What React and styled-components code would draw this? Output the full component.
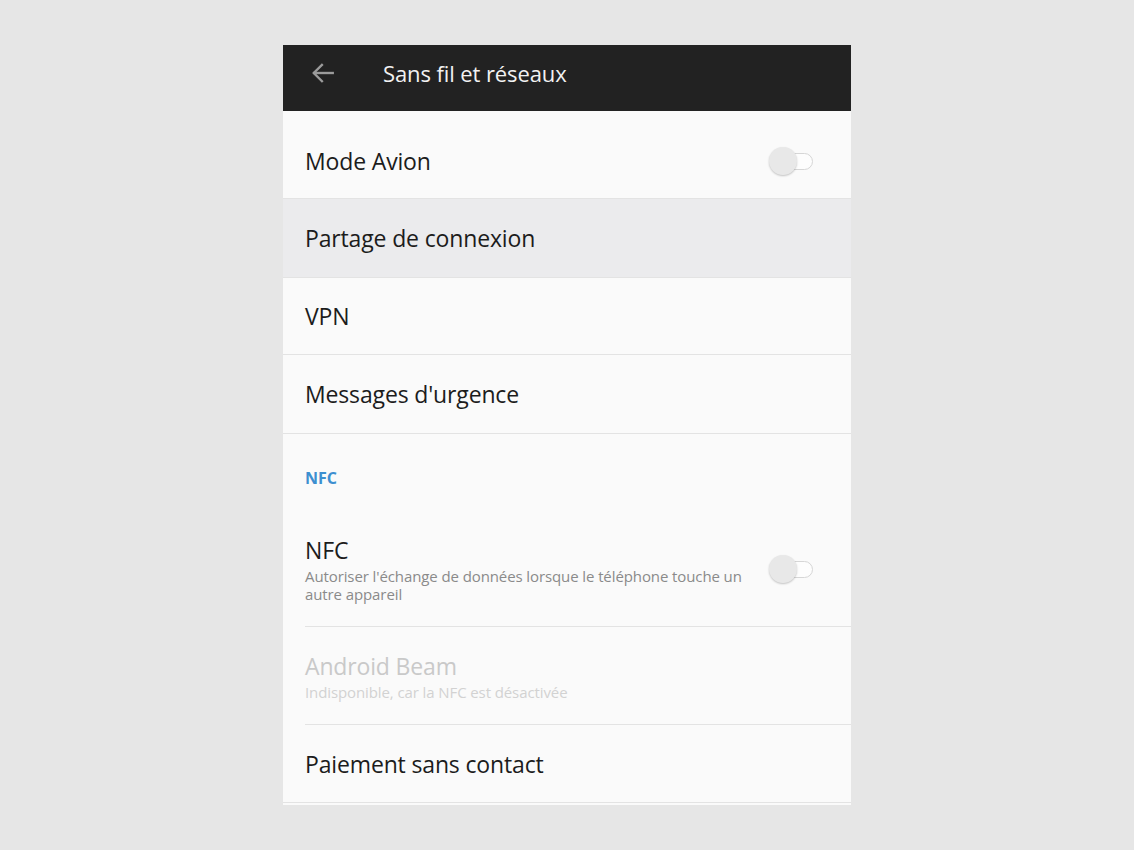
import styled, { createGlobalStyle } from "styled-components";

const GlobalStyle = createGlobalStyle`
    body {
        margin: 0;
        background: #e6e6e6;
        font-family: "Open Sans", "Noto Sans", sans-serif;
    }
`

const Page = styled.div`
    padding-top: 45px;
    min-height: 850px;
    box-sizing: border-box;
`

const Phone = styled.div`
    width: 568px;
    margin: 0 auto;
    background: #fafafa;
    padding-bottom: 2px;
`

const Toolbar = styled.div`
    height: 66px;
    background: #222222;
    display: flex;
    align-items: center;
    padding-left: 27px;
    padding-bottom: 10px;
    box-sizing: border-box;
`

const BackButton = styled.div`
    width: 26px;
    height: 26px;
    display: flex;
    align-items: center;
    justify-content: center;
    margin-right: 47px;
`

const ToolbarTitle = styled.div`
    color: #f2f2f2;
    font-size: 22px;
    letter-spacing: -0.1px;
`

const Row = styled.div`
    display: flex;
    align-items: center;
    min-height: ${p => p.$height || 77}px;
    padding: ${p => p.$pad || "0"};
    margin-left: ${p => (p.$inset ? 22 : 0)}px;
    padding-left: ${p => (p.$inset ? 0 : 22)}px;
    padding-right: 38px;
    background: ${p => (p.$pressed ? "#ebebed" : "transparent")};
    border-bottom: 1px solid #e3e3e3;
    box-sizing: border-box;
`

const RowText = styled.div`
    flex: 1;
    display: flex;
    flex-direction: column;
`

const Title = styled.div`
    font-size: 23px;
    line-height: 30px;
    letter-spacing: -0.15px;
    color: ${p => (p.$disabled ? "#c9c9c9" : "#1c1c1c")};
`

const Summary = styled.div`
    margin-top: 2px;
    font-size: 15px;
    line-height: 18px;
    letter-spacing: -0.1px;
    color: ${p => (p.$disabled ? "#d2d2d2" : "#8a8a8a")};
    max-width: 450px;
`

const Category = styled.div`
    padding: 34px 22px 24px;
    font-size: 16px;
    line-height: 20px;
    font-weight: 700;
    color: #3d8fd0;
`

const SwitchWrap = styled.div`
    position: relative;
    width: 45px;
    height: 30px;
    flex-shrink: 0;
    margin-left: 20px;
`

const Track = styled.div`
    position: absolute;
    left: 10px;
    top: 7px;
    width: 35px;
    height: 17px;
    border: 1.5px solid #d6d6d6;
    border-radius: 9px;
    background: #fdfdfd;
    box-sizing: border-box;
`

const Thumb = styled.div`
    position: absolute;
    left: 1px;
    top: 1px;
    width: 28px;
    height: 28px;
    border-radius: 50%;
    background: #e8e8e8;
    box-shadow: 0 1px 2px rgba(0, 0, 0, 0.22);
`

function Switch() {
    return (
        <SwitchWrap>
            <Track />
            <Thumb />
        </SwitchWrap>
    );
}

function BackArrow() {
    return (
        <svg width="26" height="26" viewBox="0 0 24 24" fill="none"
             stroke="#9b9b9b" strokeWidth="2.2" strokeLinecap="square">
            <path d="M21 12H4" />
            <path d="M11 4.5L3.5 12L11 19.5" strokeLinejoin="miter" />
        </svg>
    );
}

export default function App() {
    return (
        <>
            <GlobalStyle />
            <Page>
                <Phone>
                    <Toolbar>
                        <BackButton><BackArrow /></BackButton>
                        <ToolbarTitle>Sans fil et réseaux</ToolbarTitle>
                    </Toolbar>

                    <Row $height={88} $pad="12px 0 0">
                        <RowText><Title>Mode Avion</Title></RowText>
                        <Switch />
                    </Row>
                    <Row $pressed $height={79}>
                        <RowText><Title>Partage de connexion</Title></RowText>
                    </Row>
                    <Row $height={77}>
                        <RowText><Title>VPN</Title></RowText>
                    </Row>
                    <Row $height={79}>
                        <RowText><Title>Messages d'urgence</Title></RowText>
                    </Row>

                    <Category>NFC</Category>
                    <Row $inset $pad="23px 0 23px">
                        <RowText>
                            <Title>NFC</Title>
                            <Summary>Autoriser l'échange de données lorsque le téléphone touche un autre appareil</Summary>
                        </RowText>
                        <Switch />
                    </Row>
                    <Row $inset $pad="24px 0 23px">
                        <RowText>
                            <Title $disabled>Android Beam</Title>
                            <Summary $disabled>Indisponible, car la NFC est désactivée</Summary>
                        </RowText>
                    </Row>
                    <Row $height={78}>
                        <RowText><Title>Paiement sans contact</Title></RowText>
                    </Row>
                </Phone>
            </Page>
        </>
    );
}
